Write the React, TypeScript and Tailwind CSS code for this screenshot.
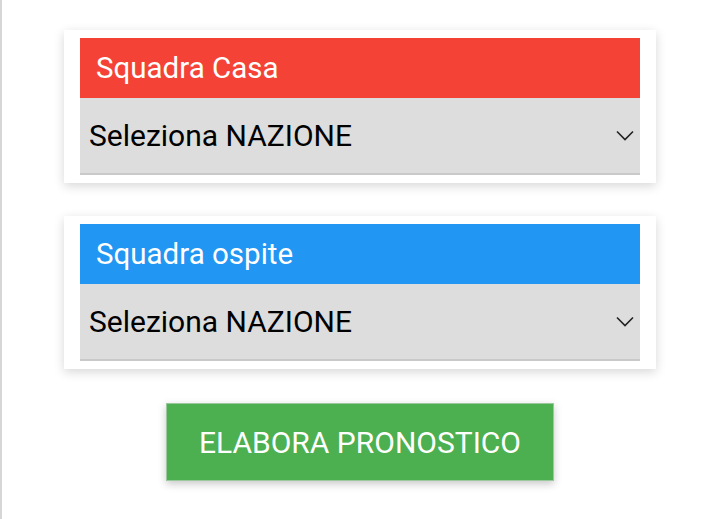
type Team = { key: string; label: string; bar: string }

const TEAMS: Team[] = [
  { key: 'home', label: 'Squadra Casa', bar: 'bg-[#f44336]' },
  { key: 'away', label: 'Squadra ospite', bar: 'bg-[#2196f3]' },
]

function Chevron() {
  return (
    <svg width="18" height="11" viewBox="0 0 18 11" fill="none" className="text-[#222]">
      <polyline points="1,1.5 9,9.5 17,1.5" stroke="currentColor" strokeWidth="1.6" />
    </svg>
  )
}

function TeamCard({ label, bar }: Team) {
  return (
    <div className="bg-white px-4 py-2 shadow-[0_3px_10px_rgba(0,0,0,0.16)]">
      <div className={`${bar} h-[60px] flex items-center px-[16px] text-white text-[29.5px]`}>
        {label}
      </div>
      <div className="h-[77px] bg-[#dddddd] border-b-2 border-[#c9c9c9] flex items-center justify-between pl-[9px] pr-[6px]">
        <span className="text-[30px] text-black">Seleziona NAZIONE</span>
        <Chevron />
      </div>
    </div>
  )
}

export default function App() {
  return (
    <div
      className="min-h-[519px] bg-white border-l-2 border-[#d6d6d6] pt-[30px] pl-[62px] pr-[64px]"
      style={{ fontFamily: 'Roboto, "Noto Sans", sans-serif' }}
    >
      <div className="flex flex-col gap-[33px]">
        {TEAMS.map(t => (
          <TeamCard key={t.key} {...t} />
        ))}
      </div>

      <div className="flex justify-center mt-[34px]">
        <button className="w-[388px] h-[78px] bg-[#4caf50] border border-[#9bc99d] text-white text-[30px] shadow-[0_3px_8px_rgba(0,0,0,0.22)]">
          ELABORA PRONOSTICO
        </button>
      </div>
    </div>
  )
}
